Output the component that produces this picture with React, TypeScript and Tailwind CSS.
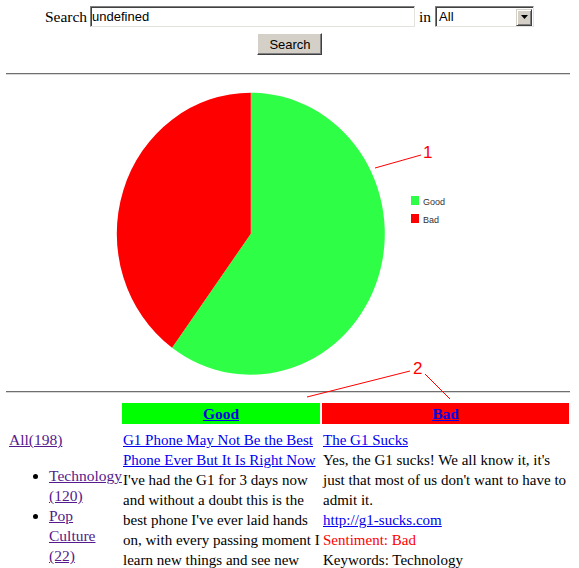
import React from 'react';

const cx = 250.8;
const cy = 231.7;
const rx = 134;
const ry = 141;

// 60% good, 40% bad; split point on the ellipse at 216deg clockwise from the top
const goodShare = 0.6;
const ang = goodShare * 2 * Math.PI;
const sx = cx + rx * Math.sin(ang);
const sy = cy - ry * Math.cos(ang);

const goodLines = [
  "I've had the G1 for 3 days now",
  'and without a doubt this is the',
  "best phone I've ever laid hands",
  'on, with every passing moment I',
  'learn new things and see new',
];

const badLines = [
  "Yes, the G1 sucks! We all know it, it's",
  "just that most of us don't want to have to",
  'admit it.',
];

const Hr = () => (
  <div className="ml-[6px] w-[564px] border-t border-b border-t-[#6f6f6f] border-b-[#d8d8d8]" />
);

export default function App() {
  return (
    <div className="relative h-[568px] w-[579px] overflow-hidden bg-white font-['Liberation_Serif',serif] text-black">
      {/* search form */}
      <div className="flex items-center justify-center pt-[5px]">
        <span className="mr-[3px] text-[15.5px]">Search</span>
        <div className="flex h-[21px] w-[325px] items-center border border-t-[#808080] border-l-[#808080] border-r-[#e4e2dc] border-b-[#e4e2dc] bg-white pl-[1px] font-['Liberation_Sans',sans-serif] text-[13px] shadow-[inset_1px_1px_0_#404040]">
          undefined
        </div>
        <span className="mx-[4px] text-[15.5px]">in</span>
        <div className="flex h-[21px] w-[99px] items-center justify-between border border-t-[#808080] border-l-[#808080] border-r-[#e4e2dc] border-b-[#e4e2dc] bg-white pl-[2px] font-['Liberation_Sans',sans-serif] text-[13px] shadow-[inset_1px_1px_0_#404040]">
          <span className="pt-px pl-px">All</span>
          <div className="mr-px mt-px flex h-[17px] w-[16px] items-center justify-center border border-t-[#d4d0c8] border-l-[#d4d0c8] border-r-[#404040] border-b-[#404040] bg-[#d4d0c8] shadow-[inset_1px_1px_0_#ffffff,inset_-1px_-1px_0_#808080]">
            <svg width="7" height="4" viewBox="0 0 7 4">
              <path d="M0 0 H7 L3.5 4 Z" fill="#000" />
            </svg>
          </div>
        </div>
      </div>
      <div className="mt-[5px] flex justify-center">
        <button className="h-[22px] w-[65px] border border-t-[#ffffff] border-l-[#ffffff] border-r-[#404040] border-b-[#404040] bg-[#d4d0c8] pl-[1px] font-['Liberation_Sans',sans-serif] text-[13px] shadow-[inset_-1px_-1px_0_#808080]">
          Search
        </button>
      </div>

      <div className="mt-[18px]">
        <Hr />
      </div>

      {/* chart */}
      <svg width="579" height="316" viewBox="0 73 579 316" className="block">
        <path
          d={`M${cx} ${cy} L${cx} ${cy - ry} A${rx} ${ry} 0 1 1 ${sx} ${sy} Z`}
          fill="#2eff46"
        />
        <path
          d={`M${cx} ${cy} L${sx} ${sy} A${rx} ${ry} 0 0 1 ${cx} ${cy - ry} Z`}
          fill="#ff0000"
        />
        <rect x="411" y="194" width="8" height="9" fill="#2eff46" />
        <text x="423" y="203" fontSize="9" fill="#333" fontFamily="Liberation Sans, sans-serif">
          Good
        </text>
        <rect x="411" y="212" width="8" height="9" fill="#ff0000" />
        <text x="423" y="221" fontSize="9" fill="#333" fontFamily="Liberation Sans, sans-serif">
          Bad
        </text>
      </svg>

      <Hr />

      {/* results */}
      <div className="ml-[7px] mt-[10px] grid grid-cols-[113px_198px_247px] gap-x-[2px] gap-y-[6px] text-[15px] leading-[20px]">
        <div />
        <div className="flex h-[21px] items-center justify-center bg-[#00ff00] text-[15.5px] font-bold">
          <a href="#" className="text-[#0000ee] underline">Good</a>
        </div>
        <div className="flex h-[21px] items-center justify-center bg-[#ff0000] text-[15.5px] font-bold">
          <a href="#" className="text-[#0000ee] underline">Bad</a>
        </div>

        <div className="pl-[2px] text-[15.5px]">
          <a href="#" className="text-[#551a8b] underline">All(198)</a>
          <ul className="mt-[16px] list-disc pl-[40px] whitespace-nowrap">
            <li>
              <a href="#" className="text-[#551a8b] underline">
                Technology
                <br />
                (120)
              </a>
            </li>
            <li>
              <a href="#" className="text-[#551a8b] underline">
                Pop
                <br />
                Culture
                <br />
                (22)
              </a>
            </li>
          </ul>
        </div>

        <div className="pl-px whitespace-nowrap">
          <a href="#" className="text-[#0000ee] underline">
            G1 Phone May Not Be the Best
            <br />
            Phone Ever But It Is Right Now
          </a>
          {goodLines.map((l) => (
            <div key={l}>{l}</div>
          ))}
        </div>

        <div className="pl-px whitespace-nowrap">
          <a href="#" className="text-[#0000ee] underline">The G1 Sucks</a>
          {badLines.map((l) => (
            <div key={l}>{l}</div>
          ))}
          <a href="#" className="block text-[#0000ee] underline">http://g1-sucks.com</a>
          <div className="text-[#ff0000]">Sentiment: Bad</div>
          <div>Keywords: Technology</div>
        </div>
      </div>

      {/* annotation marks over the chart and table */}
      <svg
        className="pointer-events-none absolute top-0 left-0"
        width="579"
        height="568"
        viewBox="0 0 579 568"
      >
        <line x1="375" y1="168" x2="421" y2="155" stroke="#ff0000" strokeWidth="1" />
        <text x="423" y="158" fontSize="17" fill="#ff0000" fontFamily="Liberation Sans, sans-serif">
          1
        </text>
        <line x1="307" y1="397" x2="410" y2="371" stroke="#ff0000" strokeWidth="1" />
        <line x1="425" y1="374" x2="450" y2="399" stroke="#ff0000" strokeWidth="1" />
        <text x="413" y="374" fontSize="17" fill="#ff0000" fontFamily="Liberation Sans, sans-serif">
          2
        </text>
      </svg>
    </div>
  );
}
